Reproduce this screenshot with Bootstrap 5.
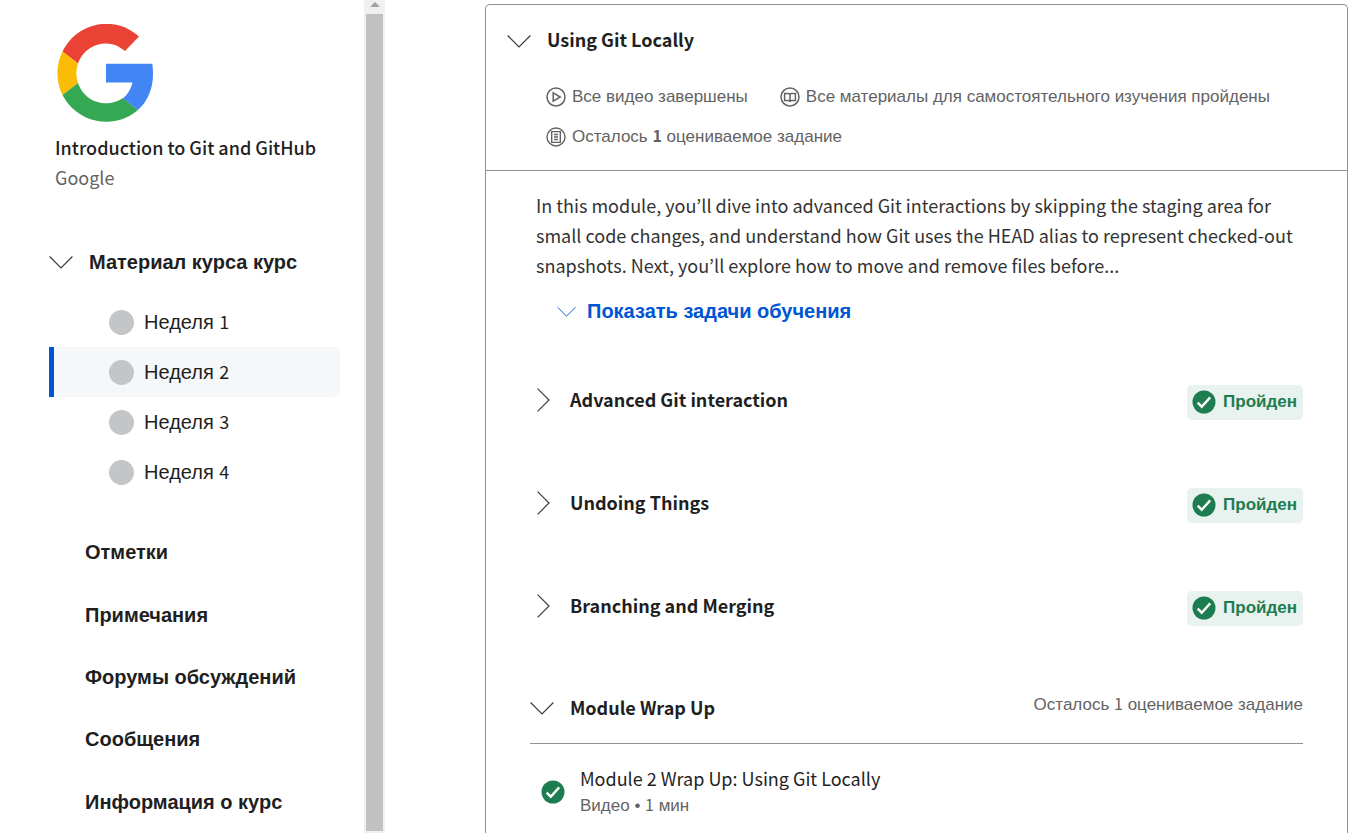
<!DOCTYPE html>
<html lang="ru">
<head>
<meta charset="utf-8">
<meta name="viewport" content="width=device-width, initial-scale=1">
<title>Introduction to Git and GitHub</title>
<link href="https://cdn.jsdelivr.net/npm/bootstrap@5.3.0/dist/css/bootstrap.min.css" rel="stylesheet">
<style>
  :root { --ink: #1f1f1f; --muted: #636363; --blue: #0056d2; --green: #1d7c50; --line: #8f9194; }
  body { font-family: "Liberation Sans", Arial, sans-serif; font-size: 20px; line-height: 30px; color: var(--ink); background: #fff; }
  h1, h2, h3, p { font-size: inherit; line-height: inherit; margin: 0; }
  a { color: inherit; text-decoration: none; }
  button { background: none; border: 0; padding: 0; color: inherit; text-align: left; }
  svg { flex: none; display: block; fill: none; stroke: currentColor; }
  .chevron { stroke: #3c3c3c; }
  .latin { font-family: "Noto Sans CJK KR", "Liberation Sans", sans-serif; font-size: 18px; }
  .num { font-family: "Noto Sans CJK KR", sans-serif; font-size: 18px; line-height: 1; }
  .num-sm { font-family: "Noto Sans CJK KR", sans-serif; font-size: 16px; line-height: 1; }
  .meta { font-size: 17px; color: var(--muted); }
  .sidebar { width: 364px; padding: 24px 24px 0 49px; }
  .brand { padding-left: 6px; }
  .brand svg { margin: 0 0 10px 2px; stroke: none; }
  .brand h1 { font-weight: 500; }
  .brand p { font-size: 18px; }
  .course-toggle { gap: 16px; margin: 55px 0 20px; height: 30px; }
  .week { height: 50px; gap: 10px; padding-left: 55px; border-left: 5px solid transparent; border-radius: 0 5px 5px 0; }
  .week.active { background: #f5f7f9; border-left-color: var(--blue); }
  .dot { width: 25px; height: 25px; background: #c4c5c7; }
  .side-links { margin-top: 24px; padding-left: 36px; }
  .track { width: 21px; background: #f0f0f0; padding: 2px; }
  .track svg { height: 12px; margin: 0 auto; fill: #a3a3a3; stroke: none; }
  .thumb { background: #c1c1c1; }
  .content { padding: 4px 18px 0 100px; }
  .module { border: 1px solid var(--line); border-bottom: 0; border-radius: 5px 5px 0 0; }
  .module-head { padding: 19px 20px 18px 21px; border-bottom: 1px solid var(--line); }
  .module-head button span { padding-bottom: 3px; }
  .facts { padding-left: 39px; margin-top: 25px; column-gap: 32px; row-gap: 10px; }
  .facts li { gap: 6px; }
  .module-body { padding: 19px 44px 0; }
  .intro { padding: 0 0 16px 6px; color: #333; }
  .goals { color: var(--blue); gap: 11px; margin-left: 27px; }
  .lesson { height: 103px; }
  .lesson-list { margin-top: 22px; }
  .lesson button { gap: 16px; }
  .lesson button span { padding-bottom: 2px; }
  .done { background: #e8f2ee; color: var(--green); font-size: 17px; border-radius: 5px; height: 35px; gap: 7px; padding: 0 6px 0 5px; margin-top: 5px; }
  .wrapup { height: 87px; padding-top: 16px; border-bottom: 1px solid var(--line); }
  .wrapup .meta { padding-bottom: 6px; }
  .item { gap: 15px; padding: 21px 0 20px 11px; }
  .item .latin, .item .meta { line-height: 27px; }
</style>
</head>
<body>
<svg class="d-none" aria-hidden="true">
  <symbol id="down" viewBox="0 0 24 14"><path d="M.6 1.500 12 12.900 23.4 1.500" stroke-width="1.2"/></symbol>
  <symbol id="right" viewBox="0 0 24 24"><path d="M7.600.6 19 12 7.600 23.4" stroke-width="1.2"/></symbol>
  <symbol id="check" viewBox="0 0 24 24"><circle cx="12" cy="12" r="11.5" fill="#1d7c50" stroke="none"/><path d="m5.700 12.700 4 4L18.200 7.400" stroke="#fff" stroke-width="2.4"/></symbol>
</svg>
<div class="d-flex vh-100 overflow-hidden">
  <aside class="sidebar d-flex flex-column flex-shrink-0">
    <div class="brand">
      <svg width="97" height="98" viewBox="0 0 97 98" role="img" aria-label="Google">
        <path fill="#ea4335" d="M5.500 27.500A48.500 48.500 0 0 1 82 12.500L68 27A29 29 0 0 0 21 39.500Z"/>
        <path fill="#fbbc05" d="M5.500 27.500L21 39.500A29 29 0 0 0 21 59L5.500 71A49 49 0 0 1 5.500 27.500Z"/>
        <path fill="#34a853" d="M5.500 71L21 59A29.500 29.500 0 0 0 66 74L81 86A49 49 0 0 1 5.500 71Z"/>
        <path fill="#4285f4" d="M49 39.800H95.300C98 59 93 75 81 86L66 74.200C71 70 74 65 75.500 58.500H49Z"/>
      </svg>
      <h1 class="latin text-nowrap">Introduction to Git and GitHub</h1>
      <p class="latin meta">Google</p>
    </div>
    <button class="course-toggle d-flex align-items-center fw-bold" type="button">
      <svg class="chevron" width="24" height="14"><use href="#down"/></svg>Материал курса курс
    </button>
    <nav aria-label="Недели">
      <a class="week d-flex align-items-center" href="#w1"><span class="dot rounded-circle"></span><span>Неделя <span class="num">1</span></span></a>
      <a class="week active d-flex align-items-center" href="#w2" aria-current="page"><span class="dot rounded-circle"></span><span>Неделя <span class="num">2</span></span></a>
      <a class="week d-flex align-items-center" href="#w3"><span class="dot rounded-circle"></span><span>Неделя <span class="num">3</span></span></a>
      <a class="week d-flex align-items-center" href="#w4"><span class="dot rounded-circle"></span><span>Неделя <span class="num">4</span></span></a>
    </nav>
    <nav class="side-links d-flex flex-column flex-grow-1 fw-bold" aria-label="Разделы курса">
      <a class="d-flex align-items-center flex-fill" href="#grades">Отметки</a>
      <a class="d-flex align-items-center flex-fill" href="#notes">Примечания</a>
      <a class="d-flex align-items-center flex-fill" href="#forums">Форумы обсуждений</a>
      <a class="d-flex align-items-center flex-fill" href="#messages">Сообщения</a>
      <a class="d-flex align-items-center flex-fill" href="#info">Информация о курс</a>
    </nav>
  </aside>
  <div class="track d-flex flex-column flex-shrink-0" aria-hidden="true">
    <svg width="10" viewBox="0 0 10 12"><path d="M0 5 5 0l5 5Z"/></svg>
    <div class="thumb flex-grow-1"></div>
  </div>
  <main class="content flex-grow-1">
    <section class="module">
      <header class="module-head">
        <button class="d-flex align-items-center fw-bold latin" type="button">
          <svg class="chevron me-3" width="24" height="14"><use href="#down"/></svg><span>Using Git Locally</span>
        </button>
        <ul class="facts meta list-unstyled d-flex flex-wrap mb-0">
          <li class="d-flex align-items-center">
            <svg width="20" height="20" viewBox="0 0 20 20" stroke="#333" stroke-width="1.500"><circle cx="10" cy="10" r="9"/><path d="M7.200 5.800v8.400l7-4.200Z"/></svg>
            <span>Все видео завершены</span>
          </li>
          <li class="d-flex align-items-center">
            <svg width="20" height="20" viewBox="0 0 20 20" stroke="#333" stroke-width="1.500"><circle cx="10" cy="10" r="9"/><path d="M4.600 6.500h3.900Q10 6.500 10 8q0-1.500 1.500-1.500h3.900v6.900h-3.900Q10 13.400 10 14.900q0-1.500-1.500-1.500H4.600ZM10 8v7"/></svg>
            <span>Все материалы для самостоятельного изучения пройдены</span>
          </li>
          <li class="d-flex align-items-center">
            <svg width="20" height="20" viewBox="0 0 20 20" stroke="#333" stroke-width="1.400"><circle cx="10" cy="10" r="9"/><path d="M5.700 4.600h8.600v10.800H5.700ZM8 7.500h4M8 10h4M8 12.500h4"/></svg>
            <span>Осталось <b class="num-sm">1</b> оцениваемое задание</span>
          </li>
        </ul>
      </header>
      <div class="module-body">
        <p class="latin intro">In this module, you’ll dive into advanced Git interactions by skipping the staging area for small code changes, and understand how Git uses the HEAD alias to represent checked-out snapshots. Next, you’ll explore how to move and remove files before...</p>
        <button class="goals d-flex align-items-center fw-bold" type="button">
          <svg width="19" height="11" viewBox="0 0 24 14"><use href="#down"/></svg>Показать задачи обучения
        </button>
        <div class="lesson-list">
          <div class="lesson d-flex align-items-center justify-content-between">
            <button class="d-flex align-items-center fw-bold latin" type="button"><svg class="chevron" width="24" height="24"><use href="#right"/></svg><span>Advanced Git interaction</span></button>
            <span class="done d-flex align-items-center fw-bold"><svg width="24" height="24"><use href="#check"/></svg>Пройден</span>
          </div>
          <div class="lesson d-flex align-items-center justify-content-between">
            <button class="d-flex align-items-center fw-bold latin" type="button"><svg class="chevron" width="24" height="24"><use href="#right"/></svg><span>Undoing Things</span></button>
            <span class="done d-flex align-items-center fw-bold"><svg width="24" height="24"><use href="#check"/></svg>Пройден</span>
          </div>
          <div class="lesson d-flex align-items-center justify-content-between">
            <button class="d-flex align-items-center fw-bold latin" type="button"><svg class="chevron" width="24" height="24"><use href="#right"/></svg><span>Branching and Merging</span></button>
            <span class="done d-flex align-items-center fw-bold"><svg width="24" height="24"><use href="#check"/></svg>Пройден</span>
          </div>
          <div class="lesson wrapup d-flex align-items-center justify-content-between">
            <button class="d-flex align-items-center fw-bold latin" type="button"><svg class="chevron" width="24" height="14"><use href="#down"/></svg><span>Module Wrap Up</span></button>
            <span class="meta">Осталось <span class="num-sm">1</span> оцениваемое задание</span>
          </div>
        </div>
        <a class="item d-flex align-items-center" href="#video">
          <svg width="24" height="24"><use href="#check"/></svg>
          <span class="d-flex flex-column"><span class="latin">Module 2 Wrap Up: Using Git Locally</span><span class="meta">Видео • <span class="num-sm">1</span> мин</span></span>
        </a>
      </div>
    </section>
  </main>
</div>
<script src="https://cdn.jsdelivr.net/npm/bootstrap@5.3.0/dist/js/bootstrap.bundle.min.js"></script>
</body>
</html>
